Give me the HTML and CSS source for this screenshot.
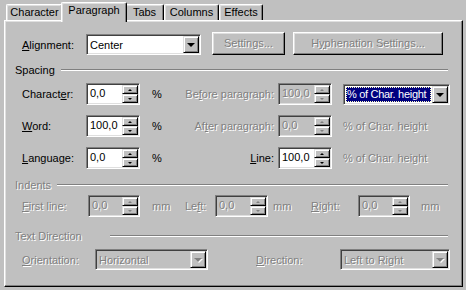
FILE: index.html
```html
<!DOCTYPE html>
<html>
<head>
<meta charset="utf-8">
<link rel="stylesheet" href="styles.css">
</head>
<body>
<div class="dlg">
  <div class="tabs">
    <div class="tab t-char">Character</div>
    <div class="tab sel t-para">Paragraph</div>
    <div class="tab t-tabs">Tabs</div>
    <div class="tab t-cols">Columns</div>
    <div class="tab t-eff">Effects</div>
  </div>
  <div class="panel">
    <div class="row-align">
      <span class="lbl w-align"><u>A</u>lignment:</span>
      <div class="combo w-center"><span class="val">Center</span><span class="dd"><i class="darr"></i></span></div>
      <div class="btn dis w-set">Settings...</div>
      <div class="btn dis w-hyph">H<u>y</u>phenation Settings...</div>
    </div>

    <div class="grp g-spacing"><span>Spacing</span><i></i></div>
    <div class="sgrid">
      <span class="lbl">Charact<u>e</u>r:</span>
      <div class="spin"><span class="val">0,0</span><span class="ud"><b class="up"></b><b class="dn"></b></span></div>
      <span class="unit">%</span>
      <span class="lbl r dis">Be<u>f</u>ore paragraph:</span>
      <div class="spin off"><span class="val">100,0</span><span class="ud"><b class="up"></b><b class="dn"></b></span></div>
      <div class="cell6"><div class="combo focus"><span class="val"><span class="hl">% of Char. height</span></span><span class="dd"><i class="darr"></i></span></div></div>

      <span class="lbl"><u>W</u>ord:</span>
      <div class="spin"><span class="val">100,0</span><span class="ud"><b class="up"></b><b class="dn"></b></span></div>
      <span class="unit">%</span>
      <span class="lbl r dis">Af<u>t</u>er paragraph:</span>
      <div class="spin off"><span class="val">0,0</span><span class="ud"><b class="up"></b><b class="dn"></b></span></div>
      <span class="cell6 dis">% of Char. height</span>

      <span class="lbl"><u>L</u>anguage:</span>
      <div class="spin"><span class="val">0,0</span><span class="ud"><b class="up"></b><b class="dn"></b></span></div>
      <span class="unit">%</span>
      <span class="lbl r"><u>L</u>ine:</span>
      <div class="spin"><span class="val">100,0</span><span class="ud"><b class="up"></b><b class="dn"></b></span></div>
      <span class="cell6 dis">% of Char. height</span>
    </div>

    <div class="grp g-indents"><span class="dis">Indents</span><i></i></div>
    <div class="row-ind">
      <span class="lbl dis w-first"><u>F</u>irst line:</span>
      <div class="spin off w-s1"><span class="val">0,0</span><span class="ud"><b class="up"></b><b class="dn"></b></span></div>
      <span class="dis w-mm1">mm</span>
      <span class="lbl dis w-left">Le<u>f</u>t:</span>
      <div class="spin off w-s2"><span class="val">0,0</span><span class="ud"><b class="up"></b><b class="dn"></b></span></div>
      <span class="dis w-mm2">mm</span>
      <span class="lbl dis w-right"><u>R</u>ight:</span>
      <div class="spin off w-s3"><span class="val">0,0</span><span class="ud"><b class="up"></b><b class="dn"></b></span></div>
      <span class="dis w-mm3">mm</span>
    </div>

    <div class="grp g-dir"><span class="dis">Text Direction</span><i></i></div>
    <div class="row-dir">
      <span class="lbl dis w-orient"><u>O</u>rientation:</span>
      <div class="combo off w-horiz"><span class="val">Horizontal</span><span class="dd"><i class="darr"></i></span></div>
      <span class="lbl dis w-direc"><u>D</u>irection:</span>
      <div class="combo off w-ltr"><span class="val">Left to Right</span><span class="dd"><i class="darr"></i></span></div>
    </div>
  </div>
</div>
</body>
</html>
```

FILE: styles.css
```css
* { box-sizing: border-box; }
html, body { margin: 0; }
body {
  background: #c0c0c0;
  font: 11px "Liberation Sans", Arial, sans-serif;
  color: #000;
  width: 466px;
  height: 290px;
  overflow: hidden;
}
u { text-decoration: underline; text-underline-offset: 1px; }

.dlg { padding: 2px 3px 0 4px; }

/* tabs */
.tabs {
  display: flex;
  align-items: flex-end;
  height: 20px;
  padding-left: 2px;
  margin-bottom: -2px;
  position: relative;
  z-index: 1;
}
.tab {
  height: 16px;
  margin-bottom: 2px;
  border-top: 1px solid #fff;
  border-left: 1px solid #fff;
  border-right: 1px solid #000;
  border-radius: 2px 2px 0 0;
  box-shadow: inset -1px 0 #808080, inset 1px 1px #dfdfdf;
  background: #c0c0c0;
  text-align: center;
  line-height: 15px;
  white-space: nowrap;
}
.tab.sel {
  height: 20px;
  margin-bottom: 0;
  position: relative;
  z-index: 2;
  line-height: 14px;
}
.t-char { width: 57px; }
.t-para { width: 66px; margin-left: -2px; margin-right: -2px; }
.t-tabs { width: 39px; }
.t-cols { width: 55px; }
.t-eff { width: 44px; }

/* panel */
.panel {
  height: 267px;
  border: 1px solid;
  border-color: #fff #000 #000 #fff;
  box-shadow: inset -1px -1px #808080, inset 1px 1px #dfdfdf;
  padding: 11px 12px 0 17px;
}

.lbl { white-space: nowrap; }
.lbl.r { text-align: right; padding-right: 4px; }
.dis { color: #808080; text-shadow: 1px 1px 0 #fff; }

/* sunken field */
.combo, .spin {
  display: flex;
  border: 1px solid;
  border-color: #808080 #fff #fff #808080;
  box-shadow: inset 1px 1px #404040, inset -1px -1px #dfdfdf;
  padding: 1px;
  background: #fff;
}
.combo { height: 21px; }
.spin { height: 22px; }
.combo.off, .spin.off { background: #c0c0c0; }
.combo.off .val, .spin.off .val { color: #808080; text-shadow: 1px 1px 0 #fff; }
.val {
  flex: 1;
  padding-left: 2px;
  line-height: 18px;
  white-space: nowrap;
  overflow: hidden;
}
.spin .val { line-height: 17px; }

.dd {
  width: 16px;
  height: 17px;
  border: 1px solid;
  border-color: #dfdfdf #000 #000 #dfdfdf;
  box-shadow: inset 1px 1px #fff, inset -1px -1px #808080;
  background: #c0c0c0;
  display: flex;
  align-items: center;
  justify-content: center;
}
.darr {
  width: 0; height: 0;
  border-left: 4px solid transparent;
  border-right: 4px solid transparent;
  border-top: 4px solid #000;
  margin-top: 1px;
}
.off .darr { border-top-color: #808080; filter: drop-shadow(1px 1px 0 #fff); }

.ud { width: 16px; display: flex; flex-direction: column; }
.ud b {
  flex: 1;
  border: 1px solid;
  border-color: #dfdfdf #000 #000 #dfdfdf;
  box-shadow: inset 1px 1px #fff, inset -1px -1px #808080;
  background: #c0c0c0;
  display: flex;
  align-items: center;
  justify-content: center;
}
.ud b::after {
  content: "";
  width: 0; height: 0;
  border-left: 2px solid transparent;
  border-right: 2px solid transparent;
}
.ud .up::after { border-bottom: 2px solid #000; }
.ud .dn::after { border-top: 2px solid #000; }
.off .ud .up::after { border-bottom-color: #808080; }
.off .ud .dn::after { border-top-color: #808080; }

/* button */
.btn {
  height: 23px;
  border: 1px solid;
  border-color: #fff #000 #000 #fff;
  box-shadow: inset -1px -1px #808080, inset 1px 1px #dfdfdf;
  text-align: center;
  line-height: 20px;
  white-space: nowrap;
}

/* row 1 */
.row-align { display: flex; align-items: flex-end; height: 23px; }
.w-align { width: 64px; align-self: center; padding-top: 2px; }
.w-center { width: 115px; }
.w-set { width: 73px; margin-left: 11px; }
.w-hyph { width: 150px; margin-left: 8px; }

/* group headers */
.grp {
  display: flex;
  align-items: center;
  height: 13px;
  margin-left: -7px;
  margin-right: 2px;
}
.grp span { white-space: nowrap; }
.grp i {
  flex: 1;
  height: 2px;
  border-top: 1px solid #808080;
  border-bottom: 1px solid #fff;
  margin-left: 6px;
}
.g-spacing { margin-top: 8px; }
.g-indents { margin-top: 9px; }
.g-dir { margin-top: 12px; }
.g-dir i { margin-left: 28px; }

/* spacing grid */
.sgrid {
  display: grid;
  grid-template-columns: 64px 54px 43px 95px 54px 118px;
  grid-auto-rows: 22px;
  row-gap: 10px;
  align-items: center;
  margin-top: 7px;
}
.unit { padding-left: 12px; }
.cell6 { padding-left: 11px; white-space: nowrap; }
.combo.focus .val { padding: 1px; }
.hl {
  display: block;
  background: #000080;
  color: #fff;
  line-height: 15px;
  padding-left: 1px;
  letter-spacing: -0.3px;
  outline: 1px dotted #ffffc0;
  outline-offset: -1px;
}

/* indents */
.row-ind { display: flex; align-items: center; height: 22px; margin-top: 4px; }
.w-first { width: 66px; }
.w-s1 { width: 52px; }
.w-mm1 { width: 45px; padding-left: 12px; }
.w-left { width: 30px; }
.w-s2 { width: 53px; }
.w-mm2 { width: 43px; padding-left: 5px; }
.w-right { width: 47px; }
.w-s3 { width: 52px; }
.w-mm3 { padding-left: 11px; }

/* direction */
.row-dir { display: flex; align-items: center; height: 21px; margin-top: 7px; }
.w-orient { width: 73px; }
.w-horiz { width: 113px; }
.w-direc { width: 84px; margin-left: 48px; }
.w-ltr { width: 110px; }
```
